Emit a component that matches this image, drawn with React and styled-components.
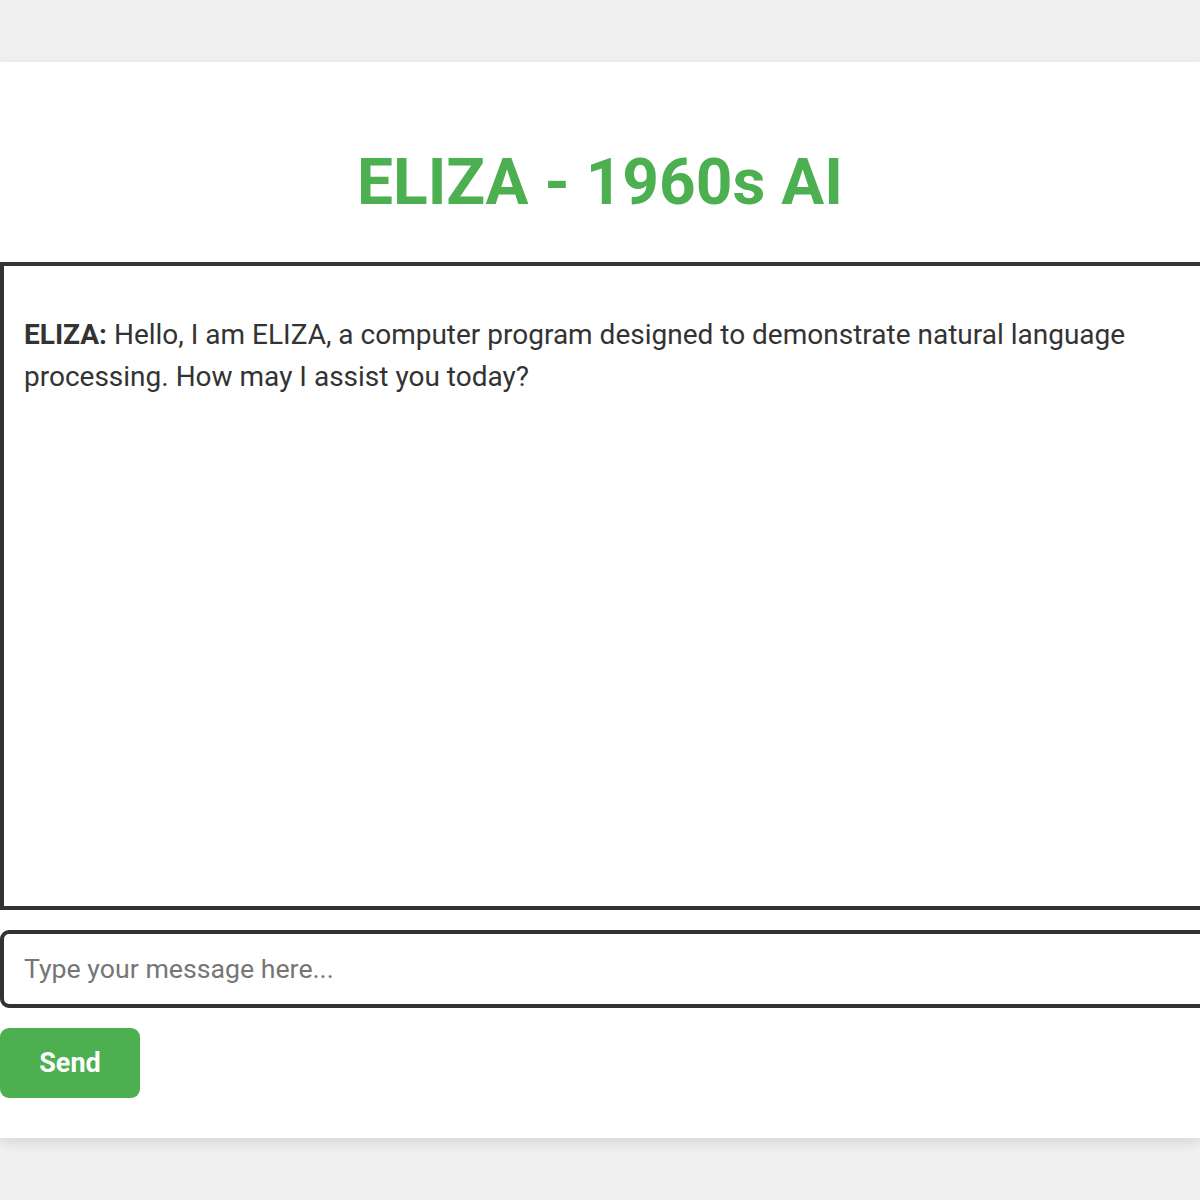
import React, { useState } from 'react'
import styled, { createGlobalStyle } from 'styled-components'

const GlobalStyle = createGlobalStyle`
    html, body {
        margin: 0;
        padding: 0;
        background: #f0f0f0;
        font-family: Roboto, "Liberation Sans", Arial, sans-serif;
        color: #333;
    }
    body {
        overflow: hidden;
    }
`

const Page = styled.div`
    padding: 62px 0 60px;
    overflow: hidden;
`

const Container = styled.div`
    width: 1200px;
    background: #ffffff;
    padding: 40px 0;
    box-shadow: 0 5px 12px rgba(0, 0, 0, 0.1);
`

const Title = styled.h1`
    margin: 43px 0 42px;
    text-align: center;
    color: #4caf50;
    font-size: 64px;
    font-weight: 700;
    line-height: 75px;
`

const ChatBox = styled.div`
    box-sizing: border-box;
    width: 1246px;
    height: 648px;
    padding: 20px;
    border: 4px solid #333;
    overflow-y: auto;
    background: #fff;
`

const Message = styled.div`
    margin: 28px 0 16px;
    font-size: 28px;
    line-height: 42px;
    color: #333;
    max-width: 1180px;

    strong {
        font-weight: 700;
    }
`

const Input = styled.input`
    display: block;
    box-sizing: border-box;
    width: 1246px;
    height: 78px;
    margin-top: 20px;
    padding: 0 20px;
    border: 4px solid #333;
    border-radius: 9px;
    font-family: inherit;
    font-size: 26.7px;
    color: #333;
    outline: none;

    &::placeholder {
        color: #767676;
    }
`

const SendButton = styled.button`
    display: block;
    width: 140px;
    height: 70px;
    margin-top: 20px;
    border: none;
    border-radius: 9px;
    background: #4caf50;
    color: #fff;
    font-family: inherit;
    font-size: 27px;
    font-weight: 700;
    cursor: pointer;
`

const App = () => {
    const [text, setText] = useState('')

    return (
        <Page>
            <GlobalStyle />
            <Container>
                <Title>ELIZA - 1960s AI</Title>
                <ChatBox>
                    <Message>
                        <strong>ELIZA:</strong> Hello, I am ELIZA, a computer program designed to demonstrate natural language processing. How may I assist you today?
                    </Message>
                </ChatBox>
                <Input
                    value={text}
                    onChange={e => setText(e.target.value)}
                    placeholder="Type your message here..."
                />
                <SendButton>Send</SendButton>
            </Container>
        </Page>
    )
}

export default App
